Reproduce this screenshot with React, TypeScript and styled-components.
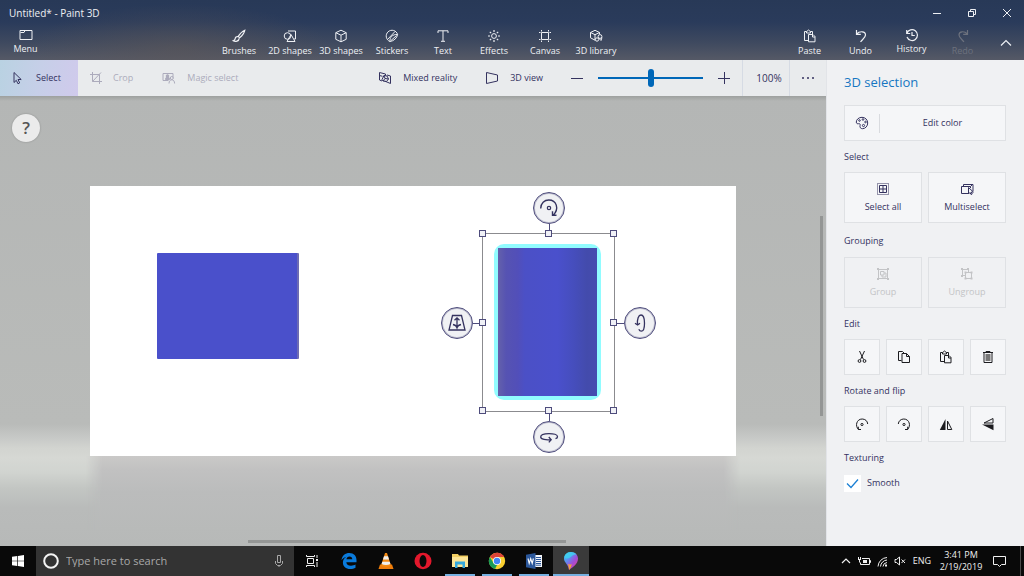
import React, { useState } from "react";
import styled, { createGlobalStyle, css } from "styled-components";

const ink = "#34325f";
const blue = "#0067b8";

const GlobalStyle = createGlobalStyle`
  *, *::before, *::after { box-sizing: border-box; }
  body {
    margin: 0;
    font-family: "Open Sans", "Noto Sans", sans-serif;
    font-size: 9px;
    line-height: 12px;
    color: ${ink};
  }
  button, input { font: inherit; color: inherit; }
  button { margin: 0; padding: 0; border: 0; background: none; }
  h1, h2, h3 { margin: 0; font-weight: 400; }
  svg { display: block; flex: none; }
`;

const Window = styled.div`
  display: flex;
  flex-direction: column;
  min-height: 100vh;
`;

/* Title bar and ribbon */

const Header = styled.header`
  color: #eef0f4;
  background:
    radial-gradient(ellipse 150px 44px at 180px 48px, rgba(96, 88, 86, 0.5), transparent),
    linear-gradient(#283957 0, #2a3b5b 22px, #3e495f 42px, #555966 60px);
`;

const TitleBar = styled.div`
  display: flex;
  align-items: center;
  justify-content: space-between;
  height: 25px;
  padding-left: 9px;
`;

const AppTitle = styled.h1`
  font-size: 10px;
  line-height: 14px;
`;

const Controls = styled.div`
  display: flex;
`;

const WindowButton = styled.button`
  display: grid;
  place-items: center;
  width: 35px;
  height: 25px;
`;

const Ribbon = styled.nav`
  display: flex;
  justify-content: space-between;
  height: 35px;
`;

const RibbonGroup = styled.div`
  display: flex;
`;

const RibbonButton = styled.button<{ $raised?: boolean }>`
  display: flex;
  flex-direction: column;
  align-items: center;
  gap: ${(p) => (p.$raised ? 1 : 2)}px;
  width: 51px;
  padding-top: ${(p) => (p.$raised ? 3 : 4)}px;
  white-space: nowrap;
  &:disabled { color: #6c717d; }
`;

const CollapseButton = styled.button`
  display: grid;
  place-items: center;
  width: 36px;
`;

/* Work area */

const Body = styled.div`
  flex: 1;
  display: grid;
  grid-template-columns: minmax(0, 1fr) 198px;
`;

const Workspace = styled.main`
  display: flex;
  flex-direction: column;
`;

const Toolbar = styled.div`
  display: flex;
  justify-content: space-between;
  height: 36px;
  background: #e9ebed;
`;

const ToolGroup = styled.div`
  display: flex;
  align-items: center;
`;

const ToolButton = styled.button<{ $active?: boolean; $gap: number }>`
  display: flex;
  align-items: center;
  gap: ${(p) => p.$gap}px;
  height: 36px;
  padding: 0 18px 0 11px;
  white-space: nowrap;
  &:disabled { color: #acabbc; }
  ${(p) =>
    p.$active &&
    css`
      width: 78px;
      background: linear-gradient(100deg, #b9d2e2, #c6cfe8 50%, #d0caec);
    `}
`;

const ViewButton = styled(ToolButton)`
  padding: 0 16px 0 12px;
`;

const SquareButton = styled.button`
  display: grid;
  place-items: center;
  width: 36px;
  height: 36px;
`;

const ZoomSlider = styled.input`
  appearance: none;
  width: 105px;
  height: 18px;
  margin: 0 3px;
  background: linear-gradient(${blue}, ${blue}) center / 100% 2px no-repeat;
  &::-webkit-slider-thumb {
    appearance: none;
    width: 6px;
    height: 18px;
    border-radius: 3px;
    background: ${blue};
  }
`;

const ZoomValue = styled.output`
  display: grid;
  place-items: center;
  width: 48px;
  height: 36px;
  padding-left: 6px;
  border: solid #d6dbe4;
  border-width: 0 1px;
  font-size: 10px;
`;

const Stage = styled.section`
  position: relative;
  flex: 1;
  display: grid;
  padding: 90px;
  background:
    linear-gradient(rgba(90, 94, 92, 0.25), transparent 5px),
    linear-gradient(
      to top,
      #b7b9b8 0,
      #b9bbba 38px,
      #c3c6c3 58px,
      #d1d4d0 74px,
      #d6d8d4 88px,
      #d2d4d0 98px,
      #c7c9c7 108px,
      #b9bbb9 122px,
      #b4b6b5 100%
    );
`;

const HelpButton = styled.button`
  position: absolute;
  top: 18px;
  left: 12px;
  width: 28px;
  height: 28px;
  border-radius: 50%;
  background: #ebebeb;
  box-shadow: 0 0 2px rgba(0, 0, 0, 0.25);
  color: #555;
  font-size: 17px;
  font-weight: 600;
  line-height: 28px;
`;

const Scrollbar = styled.div<{ $vertical?: boolean }>`
  position: absolute;
  background: #949695;
  ${(p) =>
    p.$vertical
      ? css`
          top: 120px;
          right: 3px;
          width: 3px;
          height: 200px;
        `
      : css`
          left: 30%;
          bottom: 3px;
          width: 318px;
          height: 3px;
        `}
`;

const Sheet = styled.div`
  position: relative;
  background: #fff;
  &::after {
    content: "";
    position: absolute;
    top: 100%;
    left: -4px;
    right: -4px;
    height: 74px;
    background: linear-gradient(#cac9c8, #c1c1c1 14px, #bbbcbc 36px, #b8bab9);
    mask-image: linear-gradient(90deg, transparent, #000 16px, #000 calc(100% - 16px), transparent);
  }
`;

const Box = styled.div`
  position: absolute;
  top: 67px;
  left: 67px;
  width: 142px;
  height: 106px;
  border-right: 2px solid #6d6bb4;
  border-radius: 1px;
  background: #4a50cb;
`;

const Selection = styled.div`
  position: absolute;
  top: 47px;
  left: 392px;
  width: 133px;
  height: 179px;
  border: 1px solid #8b8b8f;
  padding: 10px 13px 11px 11px;
`;

const Glow = styled.div`
  height: 100%;
  padding: 4px;
  border-radius: 10px;
  background: #91fcff;
`;

const Cylinder = styled.div`
  height: 100%;
  background: linear-gradient(
    90deg,
    #6461ab 0,
    #5653b2 8%,
    #524fb9 20%,
    #4b50c6 27%,
    #4a50cc 60%,
    #464ebd 76%,
    #434bac 90%,
    #464bb0 100%
  );
`;

type Side = "top" | "right" | "bottom" | "left";

const sides: Record<Side, ReturnType<typeof css>> = {
  top: css`top: -42px; left: calc(50% - 16px);`,
  bottom: css`bottom: -42px; left: calc(50% - 16px);`,
  left: css`left: -42px; top: calc(50% - 16px);`,
  right: css`right: -42px; top: calc(50% - 16px);`,
};

const stems: Record<Side, ReturnType<typeof css>> = {
  top: css`top: 31px; left: 15px; width: 1px; height: 10px;`,
  bottom: css`bottom: 31px; left: 15px; width: 1px; height: 10px;`,
  left: css`left: 31px; top: 15px; width: 10px; height: 1px;`,
  right: css`right: 31px; top: 15px; width: 10px; height: 1px;`,
};

const TurnButton = styled.button<{ $side: Side }>`
  position: absolute;
  display: grid;
  place-items: center;
  width: 32px;
  height: 32px;
  border: 1px solid #4e4c7c;
  border-radius: 50%;
  background: #f0f1f4;
  box-shadow: inset 0 0 0 1px rgba(78, 76, 124, 0.35);
  ${(p) => sides[p.$side]}
  &::after {
    content: "";
    position: absolute;
    background: #4e4c7c;
    ${(p) => stems[p.$side]}
  }
`;

const Grip = styled.span<{ $x: number; $y: number }>`
  position: absolute;
  z-index: 1;
  top: calc(${(p) => p.$y}% - 4px);
  left: calc(${(p) => p.$x}% - 4px);
  width: 7px;
  height: 7px;
  border: 1px solid #4e4c7c;
  background: #f0f1f6;
`;

/* Side panel */

const Panel = styled.aside`
  padding: 12px 18px 12px 17px;
  border-left: 1px solid #e2e4e8;
  background: #f0f1f3;
`;

const PanelTitle = styled.h2`
  margin-bottom: 13px;
  color: #1677c2;
  font-size: 13px;
  line-height: 20px;
`;

const SectionTitle = styled.h3<{ $wide?: boolean }>`
  padding: ${(p) => (p.$wide ? "10px 0 8px" : "8px 0 7px")};
  font-size: 9px;
  line-height: 16px;
`;

const ButtonGrid = styled.div<{ $columns: number }>`
  display: grid;
  grid-template-columns: repeat(${(p) => p.$columns}, 1fr);
  gap: 6px;
`;

const panelButton = css`
  border: 1px solid #dfe1e4;
  background: #f5f6f8;
`;

const EditColorButton = styled.button`
  ${panelButton}
  display: flex;
  align-items: center;
  width: 100%;
  height: 36px;
`;

const Swatch = styled.span`
  display: grid;
  place-items: center;
  width: 35px;
  height: 19px;
  border-right: 1px solid #d9dbdf;
`;

const ButtonText = styled.span`
  flex: 1;
  text-align: center;
`;

const LargeButton = styled.button`
  ${panelButton}
  display: flex;
  flex-direction: column;
  align-items: center;
  justify-content: center;
  gap: 5px;
  height: 51px;
  &:disabled {
    color: #c3c4c6;
    background: #f0f1f3;
  }
`;

const SmallButton = styled.button`
  ${panelButton}
  display: grid;
  place-items: center;
  height: 36px;
  color: #1c1c20;
`;

const CheckLabel = styled.label`
  display: flex;
  align-items: center;
  gap: 6px;
  height: 20px;
`;

const CheckBox = styled.input`
  appearance: none;
  width: 17px;
  height: 17px;
  margin: 0;
  background: #fff;
  &:checked {
    background: #fff
      url("data:image/svg+xml,%3Csvg xmlns='http://www.w3.org/2000/svg' viewBox='0 0 17 17'%3E%3Cpath d='M3 8.5l4 4 7-8' fill='none' stroke='%231a7fd4' stroke-width='1.3'/%3E%3C/svg%3E");
  }
`;

/* Taskbar */

const Taskbar = styled.footer`
  display: flex;
  height: 30px;
  background: #090909;
  color: #f0f0f0;
`;

const StartButton = styled.button`
  display: grid;
  place-items: center;
  width: 36px;
`;

const Search = styled.label`
  display: flex;
  align-items: center;
  gap: 7px;
  width: 258px;
  padding: 0 10px 0 7px;
  background: #333;
  color: #a8a8a8;
`;

const SearchInput = styled.input`
  flex: 1;
  min-width: 0;
  padding: 0;
  border: 0;
  background: none;
  font-size: 11px;
  outline: 0;
  &::placeholder { color: #a8a8a8; opacity: 1; }
`;

const Apps = styled.nav`
  display: flex;
  gap: 1px;
`;

const AppButton = styled.button<{ $open?: boolean; $current?: boolean }>`
  display: grid;
  place-items: center;
  width: 36px;
  ${(p) =>
    p.$open &&
    css`
      background: linear-gradient(#76b0e0, #76b0e0) bottom / 30px 2px no-repeat;
    `}
  ${(p) =>
    p.$current &&
    css`
      background: linear-gradient(#76b0e0, #76b0e0) bottom / 100% 2px no-repeat #3a3a3a;
    `}
`;

const Tray = styled.div`
  display: flex;
  align-items: center;
  gap: 6px;
  margin-left: auto;
`;

const Language = styled.span`
  margin-left: 1px;
`;

const Clock = styled.time`
  width: 48px;
  text-align: center;
  white-space: nowrap;
`;

const Notifications = styled.button`
  display: grid;
  place-items: center;
  width: 30px;
  height: 30px;
  border-right: 1px solid #4a4a4a;
  padding-right: 13px;
  margin-right: 3px;
`;

/* Icons */

interface IconProps {
  w?: number;
  h?: number;
  children: React.ReactNode;
}

const Icon = ({ w = 14, h = 14, children }: IconProps) => (
  <svg width={w} height={h} viewBox={`0 0 ${w} ${h}`} fill="none" stroke="currentColor" strokeWidth={1} aria-hidden="true">
    {children}
  </svg>
);

const MenuIcon = () => (
  <Icon><path d="M1 2.500h12v9H1zM1.500 4.500h3.500l1-2" /></Icon>
);
const BrushIcon = () => (
  <Icon>
    <path d="M12.800 1.200c-2 .8-5 3.600-6.600 6.200l1.400 1.400c2.400-1.800 4.800-5.200 5.200-7.600zM5.800 7.600c-1.400-.2-2.400.6-2.600 2-.2 1.200-.8 1.800-2 2.200 2.200 1.200 5.800.4 6-2.400" strokeWidth={1.200} />
  </Icon>
);
const Shapes2DIcon = () => (
  <Icon>
    <path d="M5 2h7.500v8h-1.500" /><circle cx="4.500" cy="7" r="3.300" /><path d="M8 5.500l4 7H4z" />
  </Icon>
);
const CubeIcon = () => (
  <Icon><path d="M7 1.200l5.200 2.500v6.600L7 12.800l-5.200-2.500V3.700zM1.800 3.700L7 6.200l5.200-2.500M7 6.200v6.600" /></Icon>
);
const StickerIcon = () => (
  <Icon>
    <path d="M12.600 5.500A5.800 5.800 0 1 0 5 12.500c4-.5 7-3.500 7.600-7zM5 12.500c-.5-4 2.500-7.500 7.600-7M2.500 10.500l7.500-8M6 11.500l5.500-5" />
  </Icon>
);
const TextIcon = () => (
  <Icon><path d="M2 4V1.800h10V4M7 1.800v10.400M5 12.300h4" /></Icon>
);
const EffectsIcon = () => (
  <Icon>
    <circle cx="7" cy="7" r="2.400" />
    <path d="M7 1v2M7 11v2M1 7h2M11 7h2M2.800 2.800l1.400 1.400M9.800 9.800l1.400 1.400M2.800 11.200l1.400-1.400M9.800 4.200l1.400-1.400" strokeWidth={1.200} />
  </Icon>
);
const CanvasIcon = () => (
  <Icon><path d="M3.500 1v1.500M10.500 1v1.500M3.500 11.500V13M10.500 11.500V13M1 3.500h1.500M11.500 3.500H13M1 10.500h1.500M11.500 10.500H13M3.500 3.500h7v7h-7z" /></Icon>
);
const LibraryIcon = () => (
  <Icon>
    <path d="M10.500 5V3.500L6 1.300 1.500 3.500v5.300L6 11.200V5.700L1.500 3.500M6 5.700l4.500-2.200" />
    <circle cx="11" cy="7.500" r="1.900" /><circle cx="8" cy="10.500" r="1.700" /><path d="M9.500 9l2.500 2.500 1-3" />
  </Icon>
);
const PasteIcon = () => (
  <Icon><path d="M5.500 11.500h-4v-9h2.200L5.500 1l1.800 1.500h2.200V5M3.500 2.500v1.500h4V2.500M5.500 5.500h4.500l2 2v5.300H5.500zM9.500 5.500v2.500H12" /></Icon>
);
const UndoIcon = () => (
  <Icon><path d="M2.500 1v4.300h4.300M2.700 5C5.500 1.800 11.500 2 11.500 6c0 2.500-2.500 4-5 6.800" strokeWidth={1.200} /></Icon>
);
const RedoIcon = () => (
  <Icon><path d="M11.500 1v4.300H7.200M11.300 5C8.500 1.800 3 2 3 6c0 2.500 2.500 4 5 6.800" strokeWidth={1.200} /></Icon>
);
const HistoryIcon = () => (
  <Icon><path d="M1.700 2v3.500h3.500M2 5.200A5.400 5.400 0 1 1 2 9M7 4v3.500h2.800" strokeWidth={1.200} /></Icon>
);
const PointerIcon = () => (
  <Icon w={12}><path d="M3 1.500v10l2.300-2.200 1.700 3.500 1.700-.9L7 8.500h3.200z" /></Icon>
);
const CropIcon = () => (
  <Icon><path d="M3.500 1v9.500H13M1 3.500h9.500V13M3.500 10.500l8.500-9" /></Icon>
);
const MagicIcon = () => (
  <Icon>
    <path d="M1 2.500h10v4M1 2.500v7h5.500" /><circle cx="5.500" cy="5" r="1.300" fill="currentColor" />
    <path d="M3.500 8.500c0-2 1-2.500 2-2.500s2 .5 2 2.500z" fill="currentColor" />
    <circle cx="9.800" cy="7" r="1.500" /><path d="M7 12.500c0-2.500 1.300-3.700 2.800-3.700s2.800 1.200 2.800 3.700" />
  </Icon>
);
const MixedRealityIcon = () => (
  <Icon>
    <path d="M1.500 1.500l6 1.500v1.500M1.500 1.500v7.500l2.500 1M12.500 5v7.500l-6-2.500M9 4l3.500 1M4 8.500l2-4 3 .5 1.500 3-2 2.500-3.500-.5zM6 4.500l1 3 3.500.5M7 7.500L5 10M1.500 4.500l3 .8" />
  </Icon>
);
const View3DIcon = () => (
  <Icon><path d="M1.500 1.500l11 2.500v6l-11 2.500z" /></Icon>
);
const PaletteIcon = () => (
  <Icon>
    <path d="M7 1.300C3.500 1.300 1.300 3.800 1.300 6c0 1.500 1 2 2.200 1.700 1.300-.3 2 .5 1.600 1.700-.6 2 .6 3.300 2.400 3.300 3 0 5.200-2.700 5.200-5.700 0-3.200-2.500-5.700-5.700-5.700z" />
    <circle cx="4.500" cy="4.500" r=".8" /><circle cx="8" cy="3.500" r=".8" /><circle cx="10.500" cy="6" r=".8" /><circle cx="8.500" cy="9.500" r="1.100" />
  </Icon>
);
const SelectAllIcon = () => (
  <Icon><path d="M1.500 1.500h11v11h-11z" strokeDasharray="1 1" /><path d="M3.500 3.500h7v7h-7zM7 3.500v7M3.500 7h7" /></Icon>
);
const MultiselectIcon = () => (
  <Icon><path d="M3.500 4V2.500h9.500V9M8 11.500H1.500v-7h9V6M10.500 4.500l2-2" /><path d="M8.500 5.500v6.500l1.500-1.500 1 2 1.200-.5-.8-2h2z" fill="#f5f6f8" /></Icon>
);
const GroupIcon = () => (
  <Icon><path d="M2.500 2.500h9v9h-9zM4.500 4.500H8V8H4.500zM8 6h2v4H6V8" /><path d="M1 1h2v2H1zM11 1h2v2h-2zM1 11h2v2H1zM11 11h2v2h-2z" fill="currentColor" stroke="none" /></Icon>
);
const UngroupIcon = () => (
  <Icon><path d="M5 8.500H2.500v-6h6V5M5.500 5.500h6v6h-6z" /><path d="M1 1h2v2H1zM7 1h2v2H7zM1 8h2v2H1zM4.500 4.500h2v2h-2zM10.500 4.500h2v2h-2zM4.500 10.500h2v2h-2zM10.500 10.500h2v2h-2z" fill="currentColor" stroke="none" /></Icon>
);
const CutIcon = () => (
  <Icon><path d="M4.500 1l4 8.500M9.500 1l-4 8.500" /><circle cx="4.500" cy="11" r="1.400" /><circle cx="9.500" cy="11" r="1.400" /></Icon>
);
const CopyIcon = () => (
  <Icon><path d="M4.500 10.500h-3v-9h4l2 2M5 3.500h4.500l3 3v6H5zM9.500 3.500v3h3" /></Icon>
);
const TrashIcon = () => (
  <Icon><path d="M2 2.500h10M5 2.500v-1h4v1M3 2.500v10h8v-10" /><path d="M4.500 4h5v7h-5z" fill="#777" stroke="none" /></Icon>
);
const RotateLeftIcon = () => (
  <Icon><path d="M3.500 12.500C-.2 9 1.500 2 7.200 2c3 0 5.300 2 5.500 5M6 12.500H3.300V9.700" /><circle cx="7" cy="7.500" r="1.100" /></Icon>
);
const RotateRightIcon = () => (
  <Icon><path d="M10.500 12.500C14.200 9 12.500 2 6.800 2c-3 0-5.300 2-5.500 5M8 12.500h2.700V9.700" /><circle cx="7" cy="7.500" r="1.100" /></Icon>
);
const FlipHIcon = () => (
  <Icon><path d="M6.500 2v11H.8z" fill="currentColor" stroke="none" /><path d="M8.500 4v8.500h4.300z" /></Icon>
);
const FlipVIcon = () => (
  <Icon><path d="M12.500 7.500v5.700L1 7.500z" fill="currentColor" stroke="none" /><path d="M12 1.500v4.500H3z" /></Icon>
);

const SpinIcon = () => (
  <Icon w={20} h={20}><path d="M1.700 10.500C1.700 5 5.500 2 9.800 2c7.500 0 11 8.500 4.200 15.500M17.500 17.300H13.500v-4" strokeWidth={1.400} /><circle cx="10" cy="10" r="1.700" strokeWidth={1.200} /></Icon>
);
const DepthIcon = () => (
  <Icon w={20} h={20}><path d="M5.500 2.500h9L18 17H2zM10 5v9.500M7.500 7.200L10 4.800l2.500 2.400M6 11.500c2 .5 3.500 1.500 4 3.200.5-1.700 2-2.700 4-3.200" strokeWidth={1.300} /></Icon>
);
const TiltIcon = () => (
  <Icon w={20} h={20}><path d="M7.500 11.500C7 6 8.500 2 11 2s3.500 4 3.500 8.200-1 8-3.200 8c-1.300 0-2-.8-2.500-2M5 10.200l2.600 1.800 2.400-1.800" strokeWidth={1.300} /></Icon>
);
const SwivelIcon = () => (
  <Icon w={20} h={20}><path d="M12 12.700c-5 .5-10.300-.2-10.300-2.700S5.500 6.700 10 6.700s8.500 1 8.500 3c0 1-.8 1.700-2 2M9.800 10l2.400 2.700-2.400 2.700" strokeWidth={1.300} /></Icon>
);

const EdgeLogo = () => (
  <svg width="18" height="18" viewBox="0 0 18 18" aria-hidden="true">
    <path d="M1.500 8.200C2 3.500 5.400 1 9.300 1c4.600 0 7.200 3.200 7.200 7v2.200H6.300c.2 2.400 2.300 3.500 4.700 3.500 1.800 0 3.300-.5 4.500-1.200v3.200c-1.400.8-3.200 1.300-5.300 1.300-4.300 0-7.300-2.600-7.300-6.500 0-2.600 1.400-4.600 3.600-5.800C4.500 5 2.600 6.300 1.500 8.200zM6.400 7.200h5.900c0-1.700-1-2.800-2.800-2.800-1.700 0-2.800 1.200-3.100 2.800z" fill="#0a7bdc" />
  </svg>
);
const VlcLogo = () => (
  <svg width="18" height="18" viewBox="0 0 18 18" aria-hidden="true">
    <path d="M3 12.500h12l1.500 4.500h-15z" fill="#ef7d0a" />
    <path d="M8 1h2l4 12.500c-2 1.500-8 1.500-10 0z" fill="#f58a12" />
    <path d="M7 4.200h4l1 3.200H6zM5.300 9.700h7.400l.7 2.300c-2.500 1.200-6.300 1.200-8.800 0z" fill="#f0efed" />
  </svg>
);
const OperaLogo = () => (
  <svg width="18" height="18" viewBox="0 0 18 18" aria-hidden="true">
    <ellipse cx="9" cy="9" rx="8.500" ry="8.300" fill="#e3182c" /><ellipse cx="9" cy="9" rx="3.500" ry="6" fill="#090909" />
  </svg>
);
const FolderLogo = () => (
  <svg width="18" height="18" viewBox="0 0 18 18" aria-hidden="true">
    <path d="M1 2h6l1 1.500h9V15H1z" fill="#f3cf62" /><path d="M1 5h16v10H1z" fill="#fce597" />
    <path d="M4 9.500h10V16h-2.500v-3.500h-5V16H4z" fill="#35a8dc" />
  </svg>
);
const ChromeLogo = () => (
  <svg width="18" height="18" viewBox="0 0 18 18" aria-hidden="true">
    <circle cx="9" cy="9" r="8.200" fill="#f9cf2f" />
    <path d="M9 9L1.900 4.900A8.200 8.200 0 0 1 16.100 4.900L9 5z" fill="#dc4437" /><path d="M9 .8a8.200 8.200 0 0 1 7.200 4.300H9z" fill="#dc4437" />
    <path d="M1.900 4.900L5.500 11.100 9 13l-2 4A8.200 8.200 0 0 1 1.900 4.900z" fill="#1a9b57" />
    <circle cx="9" cy="9" r="4" fill="#fff" /><circle cx="9" cy="9" r="3.200" fill="#4285f4" />
  </svg>
);
const WordLogo = () => (
  <svg width="18" height="18" viewBox="0 0 18 18" aria-hidden="true">
    <path d="M9 3h8v12H9z" fill="#f4f6fa" />
    <path d="M11 5.500h5M11 7.500h5M11 9.500h5M11 11.500h5M11 13.200h5" stroke="#2b579a" />
    <path d="M1 2.800L10.500 1v16L1 15.200z" fill="#2b579a" />
    <path d="M3 6.500l1.200 5 1.500-4.800 1.500 4.800 1.200-5" stroke="#fff" strokeWidth="1.100" fill="none" />
  </svg>
);
const Paint3DLogo = () => (
  <svg width="18" height="20" viewBox="0 0 18 20" aria-hidden="true">
    <defs>
      <linearGradient id="drop" x1="0" y1="0" x2="1" y2="1">
        <stop offset="0" stopColor="#35d6ee" /><stop offset=".35" stopColor="#5f8df0" />
        <stop offset=".6" stopColor="#a04ed8" /><stop offset="1" stopColor="#ee3d8c" />
      </linearGradient>
    </defs>
    <path d="M9 1C4.800 1 2 4 2 7.500c0 4 4.200 5.500 5 11.500 4-3 9-6 9-11.500C16 4 13.200 1 9 1z" fill="url(#drop)" />
    <path d="M2.500 6C3 3 5.500 1 9 1c2.500 0 4.500 1 5.700 2.700C12 3 10 5 8 6.500S4 8 2.500 6z" fill="#3fd3ef" opacity=".8" />
    <path d="M5.800 12.800c1.400 1 2.700.9 4 .1-.4 2.600-1.500 4.600-2.800 6.100-.1-2.500-.4-4.500-1.200-6.200z" fill="#f2a13c" />
  </svg>
);

const ribbonTools = [
  { label: "Brushes", icon: <BrushIcon /> },
  { label: "2D shapes", icon: <Shapes2DIcon /> },
  { label: "3D shapes", icon: <CubeIcon /> },
  { label: "Stickers", icon: <StickerIcon /> },
  { label: "Text", icon: <TextIcon /> },
  { label: "Effects", icon: <EffectsIcon /> },
  { label: "Canvas", icon: <CanvasIcon /> },
  { label: "3D library", icon: <LibraryIcon /> },
];

const grips = [
  [0, 0], [50, 0], [100, 0],
  [0, 50], [100, 50],
  [0, 100], [50, 100], [100, 100],
];

const editTools = [
  { label: "Cut", icon: <CutIcon /> },
  { label: "Copy", icon: <CopyIcon /> },
  { label: "Paste", icon: <PasteIcon /> },
  { label: "Delete", icon: <TrashIcon /> },
];

const rotateTools = [
  { label: "Rotate left", icon: <RotateLeftIcon /> },
  { label: "Rotate right", icon: <RotateRightIcon /> },
  { label: "Flip horizontal", icon: <FlipHIcon /> },
  { label: "Flip vertical", icon: <FlipVIcon /> },
];

const taskApps = [
  { label: "Edge", icon: <EdgeLogo /> },
  { label: "VLC", icon: <VlcLogo /> },
  { label: "Opera", icon: <OperaLogo /> },
  { label: "File Explorer", icon: <FolderLogo />, open: true },
  { label: "Chrome", icon: <ChromeLogo />, open: true },
  { label: "Word", icon: <WordLogo />, open: true },
  { label: "Paint 3D", icon: <Paint3DLogo />, open: true, current: true },
];

export default function App() {
  const [zoom, setZoom] = useState(100);
  const [smooth, setSmooth] = useState(true);

  return (
    <Window>
      <GlobalStyle />
      <Header>
        <TitleBar>
          <AppTitle>Untitled* - Paint 3D</AppTitle>
          <Controls>
            <WindowButton aria-label="Minimize"><Icon w={8} h={8}><path d="M0 4.500h8" /></Icon></WindowButton>
            <WindowButton aria-label="Restore"><Icon w={8} h={8}><path d="M.5 2.500h5v5h-5zM2.500 2.500v-2h5v5h-2" /></Icon></WindowButton>
            <WindowButton aria-label="Close"><Icon w={8} h={8}><path d="M0 0l8 8M8 0L0 8" /></Icon></WindowButton>
          </Controls>
        </TitleBar>
        <Ribbon>
          <RibbonGroup>
            <RibbonButton $raised><MenuIcon />Menu</RibbonButton>
          </RibbonGroup>
          <RibbonGroup>
            {ribbonTools.map((t) => (
              <RibbonButton key={t.label}>{t.icon}{t.label}</RibbonButton>
            ))}
          </RibbonGroup>
          <RibbonGroup>
            <RibbonButton><PasteIcon />Paste</RibbonButton>
            <RibbonButton><UndoIcon />Undo</RibbonButton>
            <RibbonButton $raised><HistoryIcon />History</RibbonButton>
            <RibbonButton disabled><RedoIcon />Redo</RibbonButton>
            <CollapseButton aria-label="Collapse ribbon">
              <Icon w={12} h={8}><path d="M1 6.500l5-5 5 5" strokeWidth={1.200} /></Icon>
            </CollapseButton>
          </RibbonGroup>
        </Ribbon>
      </Header>

      <Body>
        <Workspace>
          <Toolbar>
            <ToolGroup>
              <ToolButton $active $gap={13}><PointerIcon />Select</ToolButton>
              <ToolButton disabled $gap={10}><CropIcon />Crop</ToolButton>
              <ToolButton disabled $gap={11}><MagicIcon />Magic select</ToolButton>
            </ToolGroup>
            <ToolGroup>
              <ViewButton $gap={11}><MixedRealityIcon />Mixed reality</ViewButton>
              <ViewButton $gap={11}><View3DIcon />3D view</ViewButton>
              <SquareButton aria-label="Zoom out"><Icon w={12} h={12}><path d="M0 6.500h12" /></Icon></SquareButton>
              <ZoomSlider
                type="range"
                aria-label="Zoom"
                min={0}
                max={200}
                value={zoom}
                onChange={(e) => setZoom(Number(e.target.value))}
              />
              <SquareButton aria-label="Zoom in"><Icon w={12} h={12}><path d="M0 6.500h12M6.500 0v12" /></Icon></SquareButton>
              <ZoomValue>{zoom}%</ZoomValue>
              <SquareButton aria-label="More options">
                <Icon w={12} h={4}><path d="M0 2h2M5 2h2M10 2h2" strokeWidth={1.500} /></Icon>
              </SquareButton>
            </ToolGroup>
          </Toolbar>

          <Stage>
            <HelpButton aria-label="Help">?</HelpButton>
            <Sheet>
              <Box />
              <Selection>
                <Glow><Cylinder /></Glow>
                {grips.map(([x, y]) => <Grip key={`${x}-${y}`} $x={x} $y={y} />)}
                <TurnButton $side="top" aria-label="Rotate around Z axis"><SpinIcon /></TurnButton>
                <TurnButton $side="right" aria-label="Rotate around X axis"><TiltIcon /></TurnButton>
                <TurnButton $side="bottom" aria-label="Rotate around Y axis"><SwivelIcon /></TurnButton>
                <TurnButton $side="left" aria-label="Move forward or back"><DepthIcon /></TurnButton>
              </Selection>
            </Sheet>
            <Scrollbar $vertical />
            <Scrollbar />
          </Stage>
        </Workspace>

        <Panel>
          <PanelTitle>3D selection</PanelTitle>
          <EditColorButton>
            <Swatch><PaletteIcon /></Swatch>
            <ButtonText>Edit color</ButtonText>
          </EditColorButton>

          <SectionTitle>Select</SectionTitle>
          <ButtonGrid $columns={2}>
            <LargeButton><SelectAllIcon />Select all</LargeButton>
            <LargeButton><MultiselectIcon />Multiselect</LargeButton>
          </ButtonGrid>

          <SectionTitle $wide>Grouping</SectionTitle>
          <ButtonGrid $columns={2}>
            <LargeButton disabled><GroupIcon />Group</LargeButton>
            <LargeButton disabled><UngroupIcon />Ungroup</LargeButton>
          </ButtonGrid>

          <SectionTitle>Edit</SectionTitle>
          <ButtonGrid $columns={4}>
            {editTools.map((t) => <SmallButton key={t.label} aria-label={t.label}>{t.icon}</SmallButton>)}
          </ButtonGrid>

          <SectionTitle>Rotate and flip</SectionTitle>
          <ButtonGrid $columns={4}>
            {rotateTools.map((t) => <SmallButton key={t.label} aria-label={t.label}>{t.icon}</SmallButton>)}
          </ButtonGrid>

          <SectionTitle>Texturing</SectionTitle>
          <CheckLabel>
            <CheckBox type="checkbox" checked={smooth} onChange={(e) => setSmooth(e.target.checked)} />
            Smooth
          </CheckLabel>
        </Panel>
      </Body>

      <Taskbar>
        <StartButton aria-label="Start">
          <svg width="12" height="12" viewBox="0 0 12 12" fill="#fff" aria-hidden="true">
            <path d="M0 1.700L5.300 1v4.700H0zM6 .9L12 0v5.700H6zM0 6.300h5.300V11L0 10.300zM6 6.300h6V12l-6-.9z" />
          </svg>
        </StartButton>
        <Search>
          <Icon w={16} h={16}><circle cx="8" cy="8" r="6.800" stroke="#f4f4f4" strokeWidth={2} /></Icon>
          <SearchInput type="text" placeholder="Type here to search" aria-label="Type here to search" />
          <Icon w={10}><path d="M3.500 1.500h3v7h-3zM1.500 7v2.500l2 2h3l2-2V7M5 11.500V13" /></Icon>
        </Search>
        <Apps>
          <AppButton aria-label="Task view">
            <Icon><path d="M2.500 4.500h6v5h-6zM1.500 1v1.500h8V1M1.500 13v-1.500h8V13M12 1v3M12 8v5" /><path d="M11 5h2v2h-2z" fill="currentColor" stroke="none" /></Icon>
          </AppButton>
          {taskApps.map((a) => (
            <AppButton key={a.label} aria-label={a.label} $open={a.open} $current={a.current}>{a.icon}</AppButton>
          ))}
        </Apps>
        <Tray>
          <Icon w={10} h={8}><path d="M1 6l4-4 4 4" strokeWidth={1.200} /></Icon>
          <Icon w={14} h={10}><path d="M5 2.500h7.500v6H3.500V6.500M12.500 4.500h1v2h-1M1.500 1v2M3.500 1v2M1 3.500h3M2.500 3.500v3" /><path d="M6 4h4v3H6z" fill="currentColor" stroke="none" /></Icon>
          <Icon w={11} h={11}><path d="M1 10.500A9.500 9.500 0 0 1 10 1.500M3.500 10.500A7 7 0 0 1 10 4M6 10.500A4.500 4.500 0 0 1 10 6.500" /><path d="M8 8.500h2v2H8z" fill="currentColor" stroke="none" /></Icon>
          <Icon w={12} h={10}><path d="M1 3.500h1.500l3-2.500v8l-3-2.500H1zM7.500 3.500l3.500 3.500M11 3.500L7.500 7" /></Icon>
          <Language>ENG</Language>
          <Clock>3:41 PM<br />2/19/2019</Clock>
          <Notifications aria-label="Notifications">
            <Icon w={13} h={13}><path d="M.5 1.500h12v8H8.500l-2 2-2-2h-4z" /></Icon>
          </Notifications>
        </Tray>
      </Taskbar>
    </Window>
  );
}
